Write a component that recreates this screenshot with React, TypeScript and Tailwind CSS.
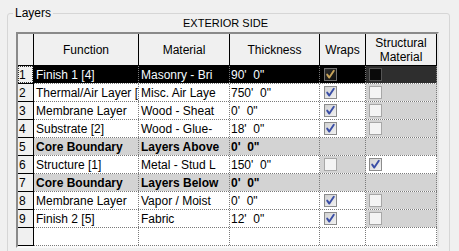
import React from "react";

type Row = {
  n: string;
  fn: string;
  mat: string;
  thick: string;
  wraps?: boolean | null;
  structural?: boolean | null;
  core?: boolean;
  selected?: boolean;
};

const rows: Row[] = [
  { n: "1", fn: "Finish 1 [4]", mat: "Masonry - Bri", thick: "90'  0\"", wraps: true, structural: false, selected: true },
  { n: "2", fn: "Thermal/Air Layer [", mat: "Misc. Air Laye", thick: "750'  0\"", wraps: true, structural: false },
  { n: "3", fn: "Membrane Layer", mat: "Wood - Sheat", thick: "0'  0\"", wraps: true, structural: false },
  { n: "4", fn: "Substrate [2]", mat: "Wood - Glue-", thick: "18'  0\"", wraps: true, structural: false },
  { n: "5", fn: "Core Boundary", mat: "Layers Above", thick: "0'  0\"", core: true },
  { n: "6", fn: "Structure [1]", mat: "Metal - Stud L", thick: "150'  0\"", wraps: false, structural: true },
  { n: "7", fn: "Core Boundary", mat: "Layers Below", thick: "0'  0\"", core: true },
  { n: "8", fn: "Membrane Layer", mat: "Vapor / Moist", thick: "0'  0\"", wraps: true, structural: false },
  { n: "9", fn: "Finish 2 [5]", mat: "Fabric", thick: "12'  0\"", wraps: true, structural: false },
];

const Check = ({ checked, dark, black }: { checked: boolean; dark?: boolean; black?: boolean }) => {
  let box = "border-[#a7a7a7] bg-[#f4f4f4]";
  if (checked) box = "border-[#8c8c8c] bg-gradient-to-br from-[#d2d2d2] to-[#f2f2f2]";
  if (dark) box = "border-[#6f6f6f] bg-gradient-to-br from-[#2d2d2d] to-[#0d0d0d]";
  if (black) box = "border-[#555555] bg-[#0a0a0a]";
  return (
    <div className={`w-[13px] h-[13px] border ${box} flex items-center justify-center`}>
      {checked && (
        <svg width="11" height="11" viewBox="0 0 11 11">
          <path
            d="M2.2 5.6 L4.3 8.6 L8.8 1.8"
            fill="none"
            stroke={dark ? "#c8a45a" : "#3a4ea6"}
            strokeWidth="1.9"
            strokeLinecap="round"
            strokeLinejoin="round"
          />
        </svg>
      )}
    </div>
  );
};

const cell = "h-full border-r border-dotted border-r-[#7a7a7a] overflow-hidden whitespace-pre flex items-center";

const BodyRow = ({ r }: { r: Row }) => {
  const base = r.selected ? "bg-black text-[#f4fbff]" : r.core ? "bg-[#d3d3d3] font-bold" : "bg-white";
  const wrapsBg = r.selected ? "bg-black" : r.core || r.wraps === false ? "bg-[#d3d3d3]" : "bg-white";
  const structBg = r.selected ? "bg-[#2e2e2e]" : r.core || !r.structural ? "bg-[#d3d3d3]" : "bg-white";
  return (
    <div className="flex h-[18px] border-b border-dotted border-b-[#7a7a7a]">
      <div className="relative w-[16px] h-[18px] -mb-px border-r border-b border-r-black border-b-black bg-[#f0f0f0] pl-[1px] flex items-center">
        {r.n}
        {r.selected && <div className="absolute inset-0 border border-dotted border-[#333]" />}
      </div>
      <div className={`${cell} w-[105px] pl-[2px] ${base}`}>{r.fn}</div>
      <div className={`${cell} w-[91px] pl-[2px] ${base}`}>{r.mat}</div>
      <div className={`${cell} w-[90px] pl-[1px] ${base}`}>{r.thick}</div>
      <div className={`${cell} w-[46px] pl-[4px] ${wrapsBg}`}>
        {!r.core && <Check checked={!!r.wraps} dark={r.selected} />}
      </div>
      <div className={`${cell} w-[71px] pl-[3px] ${structBg}`}>
        {!r.core && <Check checked={!!r.structural} black={r.selected} />}
      </div>
    </div>
  );
};

export default function App() {
  return (
    <div className="w-[459px] h-[251px] bg-[#f0f0f0] overflow-hidden text-[12px] leading-none text-black font-['Liberation_Sans',Arial,sans-serif] pt-[13px] pl-[7px]">
      <div className="relative w-[443px] h-[250px] border border-[#d6d6d6] rounded-[3px] pl-[8px] pr-[10px]">
        <div className="absolute left-[5px] -top-[7px] px-[2px] bg-[#f0f0f0] text-[12px]">Layers</div>
        <div className="h-[18px] flex items-center justify-center pr-[4px] text-[11px]">EXTERIOR SIDE</div>
        <div className="w-[423px] h-[216px] border-t-2 border-l-2 border-t-[#8a8a8a] border-l-[#8a8a8a] border-r-2 border-r-[#e4e4e4] border-b-2 border-b-[#fafafa] bg-white">
          <div className="flex h-[32px] border-b border-black bg-[#f0f0f0]">
            <div className="w-[16px] border-r border-black" />
            <div className="w-[105px] border-r border-black flex items-center justify-center">Function</div>
            <div className="w-[91px] border-r border-black flex items-center justify-center">Material</div>
            <div className="w-[90px] border-r border-black flex items-center justify-center">Thickness</div>
            <div className="w-[46px] border-r border-black flex items-center justify-center">Wraps</div>
            <div className="w-[71px] border-r border-black flex flex-col items-center justify-center leading-[14px]">
              <span>Structural</span>
              <span>Material</span>
            </div>
          </div>
          {rows.map((r) => (
            <BodyRow key={r.n} r={r} />
          ))}
          <div className="flex h-[18px] border-b border-dotted border-b-[#7a7a7a]">
            <div className="w-[16px] h-[18px] -mb-px border-r border-b border-black bg-[#f0f0f0]" />
            <div className={`${cell} w-[105px] bg-white`} />
            <div className={`${cell} w-[91px] bg-white`} />
            <div className={`${cell} w-[90px] bg-white`} />
            <div className={`${cell} w-[46px] bg-white`} />
            <div className={`${cell} w-[71px] bg-white`} />
          </div>
        </div>
      </div>
    </div>
  );
}
